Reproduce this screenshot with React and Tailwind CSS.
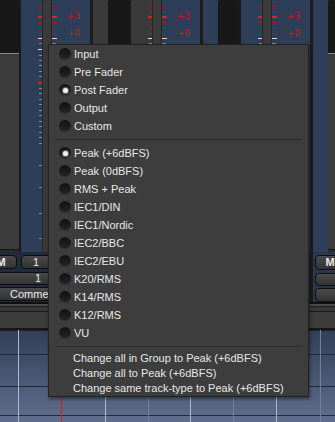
import React from 'react'

const TICKS = [
  [6, 'r'], [11, 'r'], [16, 'R'], [22, 'r'], [27, 'r'], [33, 'r'],
  [38, 'W'], [43, 'g'], [49, 'W'], [55, 'g'], [60, 'g'], [65, 'g'], [71, 'g'], [76, 'g'],
  [82, 'R'], [88, 'g'], [93, 'g'], [99, 'g'], [104, 'g'], [110, 'g'], [115, 'g'], [121, 'g'],
  [126, 'g'], [132, 'g'], [137, 'g'], [143, 'g'], [165, 'g'], [187, 'g'], [213, 'g'], [238, 'g'],
]
const TICK_COLOR = { r: '#a81c1c', R: '#e41f1f', g: '#7d8ca4', W: '#d6dde8' }

const Ticks = ({ width, align }) => (
  <svg width={width} height={252} className="block shrink-0">
    {TICKS.map(([y, k]) => {
      const len = k === 'R' || k === 'W' ? width : width - 1
      const x = align === 'right' ? width - len : 0
      return <rect key={y} x={x} y={y} width={len} height={k === 'R' ? 2 : 1} fill={TICK_COLOR[k]} />
    })}
  </svg>
)

const Fader = () => (
  <div className="flex w-[23px] shrink-0 flex-col border-r-2 border-[#1a1a1a]">
    <div className="h-[53px] rounded-t-[3px] bg-[#181818]" />
    <div className="h-px bg-[#8a8a8a]" />
    <div className="mb-[2px] flex-1 rounded-b-[3px] border-b border-[#161616] bg-[#3b3b3b]" />
  </div>
)

// one mixer strip, 110px wide: pre | fader | scale | meter bar | scale + labels | divider
const Strip = ({ preBg = 'bg-[#2f3e58]', meterBg = 'bg-[#2f3e58]', labels = true }) => (
  <div className="flex h-[252px] w-[110px] shrink-0">
    <div className={`w-[15px] shrink-0 ${preBg}`} />
    <Fader />
    <div className={`flex w-[21px] shrink-0 justify-end ${meterBg}`}>
      <Ticks width={4} align="right" />
    </div>
    <div className="w-[10px] shrink-0 border-x border-[#262626] bg-[#3a3a3a]" />
    <div className="flex w-[38px] shrink-0 bg-[#2f3e58]">
      <Ticks width={5} align="left" />
      {labels && (
        <div className="flex flex-col pl-[10px] pt-[8px] font-['DejaVu_Sans',sans-serif] text-[9px] leading-[17px] text-[#c81c1c]">
          <span>+3</span>
          <span>+0</span>
        </div>
      )}
    </div>
    <div className="w-[3px] shrink-0 bg-[#1c1c1c]" />
  </div>
)

const Btn = ({ className, children }) => (
  <div className={`flex shrink-0 items-center rounded-[4px] border border-[#0e0e0e] bg-linear-to-b from-[#4a4a4a] to-[#333333] text-[11px] leading-none text-[#ececec] ${className}`}>
    {children}
  </div>
)

const Radio = ({ on }) => (
  <div className="flex h-[12px] w-[12px] shrink-0 items-center justify-center rounded-full bg-linear-to-b from-[#111111] to-[#262626] shadow-[inset_0_-1px_0_rgba(255,255,255,0.06)]">
    {on && <div className="h-[5px] w-[5px] rounded-full bg-[#f2f2f2] shadow-[0_0_1px_1px_rgba(200,200,200,0.5)]" />}
  </div>
)

const points = [
  ['Input', false],
  ['Pre Fader', false],
  ['Post Fader', true],
  ['Output', false],
  ['Custom', false],
]
const meterTypes = [
  ['Peak (+6dBFS)', true],
  ['Peak (0dBFS)', false],
  ['RMS + Peak', false],
  ['IEC1/DIN', false],
  ['IEC1/Nordic', false],
  ['IEC2/BBC', false],
  ['IEC2/EBU', false],
  ['K20/RMS', false],
  ['K14/RMS', false],
  ['K12/RMS', false],
  ['VU', false],
]
const actions = [
  'Change all in Group to Peak (+6dBFS)',
  'Change all to Peak (+6dBFS)',
  'Change same track-type to Peak (+6dBFS)',
]

const RadioItem = ({ label, on }) => (
  <div className="flex h-[18px] items-center gap-[3px] pl-[10px]">
    <Radio on={on} />
    <span>{label}</span>
  </div>
)

const Menu = () => (
  <div className="absolute left-[48px] top-[44px] flex w-[261px] flex-col border border-[#222222] bg-[#3d3d3d] text-[11px] leading-none text-[#e8e8e8] shadow-[1px_2px_3px_rgba(0,0,0,0.45)]">
    {points.map(([label, on]) => <RadioItem key={label} label={label} on={on} />)}
    <div className="mx-[6px] my-[4px] h-px bg-[#2a2a2a]" />
    {meterTypes.map(([label, on]) => <RadioItem key={label} label={label} on={on} />)}
    <div className="mx-[6px] my-[4px] h-px bg-[#2a2a2a]" />
    {actions.map(label => (
      <div key={label} className="flex h-[15px] items-center pl-[24px]">{label}</div>
    ))}
  </div>
)

const Canvas = () => (
  <div className="h-[92px] bg-linear-to-b from-[#323f57] to-[#5f6f8d]">
    <svg width="335" height="92" className="block">
      <rect x="0" y="0" width="335" height="1" fill="#1a2232" />
      {[24, 56, 85].map(y => <rect key={y} x="0" y={y} width="335" height="1" fill="#1e293b" />)}
      {[148, 233, 320].map(x => <rect key={x} x={x} y="0" width="1" height="92" fill="#6f7f9c" />)}
      {[18, 105, 190, 276].map(x => <rect key={x} x={x} y="0" width="1" height="92" fill="#aeb9cc" />)}
      <rect x="61" y="0" width="1" height="92" fill="#d42020" />
    </svg>
  </div>
)

export default function App() {
  return (
    <div className="relative h-[422px] w-[335px] overflow-hidden bg-[#2a2a2a] font-['Liberation_Sans',Arial,sans-serif]">
      <div className="-ml-[17px] flex">
        <Strip />
        <Strip preBg="bg-[#3a3a3a]" meterBg="bg-[#3a3a3a]" />
        <Strip />
        <Strip labels={false} />
      </div>

      <div className="flex h-[50px]">
        <div className="flex w-[310px] shrink-0 flex-col bg-[#222b3b]">
          <div className="mt-[3px] flex h-[14px] gap-[4px]">
            <Btn className="-ml-[15px] w-[32px] justify-center font-bold">M</Btn>
            <Btn className="w-[30px] justify-center">1</Btn>
          </div>
          <div className="mt-[3px] flex h-[13px]">
            <Btn className="-ml-[12px] w-[100px] pl-[46px]">1</Btn>
          </div>
          <div className="mt-[2px] flex h-[14px]">
            <Btn className="-ml-[12px] w-[100px] pl-[21px]">Comments</Btn>
          </div>
        </div>
        <div className="w-[3px] shrink-0 bg-[#1c1c1c]" />
        <div className="flex flex-1 flex-col bg-[#2a374e] pl-[2px]">
          <Btn className="mt-[3px] h-[15px] w-[30px] justify-center font-bold">M</Btn>
          <Btn className="mt-[3px] h-[13px] w-[30px]" />
          <Btn className="mt-[2px] h-[14px] w-[30px]" />
        </div>
      </div>

      <div className="flex h-[28px] flex-col">
        <div className="h-[2px] bg-[#0f0f0f]" />
        <div className="h-[2px] bg-[#4b4b4b]" />
        <div className="h-px bg-[#1e1e1e]" />
        <div className="h-[4px] bg-[#383838]" />
        <div className="h-px bg-[#1a1a1a]" />
        <div className="flex-1 bg-[#3c3c3c]" />
        <div className="h-[2px] bg-[#161616]" />
      </div>

      <Canvas />
      <Menu />
    </div>
  )
}
